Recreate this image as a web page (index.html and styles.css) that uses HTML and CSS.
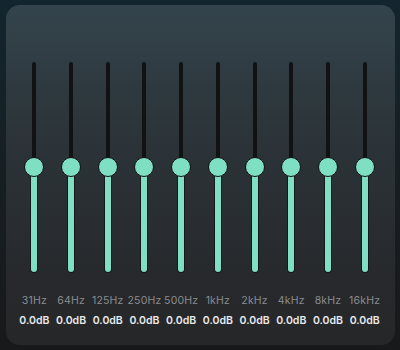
FILE: index.html
```html
<!DOCTYPE html>
<html>
<head>
  <meta charset="UTF-8">
  <title>Equalizer</title>
  <link rel="stylesheet" href="styles.css">
</head>
<body>
  <div class="page">
    <div class="eq-card">
      <div class="band">
        <div class="slider"><div class="track"></div><div class="fill"></div><div class="knob"></div></div>
        <div class="freq">31Hz</div>
        <div class="gain">0.0dB</div>
      </div>
      <div class="band">
        <div class="slider"><div class="track"></div><div class="fill"></div><div class="knob"></div></div>
        <div class="freq">64Hz</div>
        <div class="gain">0.0dB</div>
      </div>
      <div class="band">
        <div class="slider"><div class="track"></div><div class="fill"></div><div class="knob"></div></div>
        <div class="freq">125Hz</div>
        <div class="gain">0.0dB</div>
      </div>
      <div class="band">
        <div class="slider"><div class="track"></div><div class="fill"></div><div class="knob"></div></div>
        <div class="freq">250Hz</div>
        <div class="gain">0.0dB</div>
      </div>
      <div class="band">
        <div class="slider"><div class="track"></div><div class="fill"></div><div class="knob"></div></div>
        <div class="freq">500Hz</div>
        <div class="gain">0.0dB</div>
      </div>
      <div class="band">
        <div class="slider"><div class="track"></div><div class="fill"></div><div class="knob"></div></div>
        <div class="freq">1kHz</div>
        <div class="gain">0.0dB</div>
      </div>
      <div class="band">
        <div class="slider"><div class="track"></div><div class="fill"></div><div class="knob"></div></div>
        <div class="freq">2kHz</div>
        <div class="gain">0.0dB</div>
      </div>
      <div class="band">
        <div class="slider"><div class="track"></div><div class="fill"></div><div class="knob"></div></div>
        <div class="freq">4kHz</div>
        <div class="gain">0.0dB</div>
      </div>
      <div class="band">
        <div class="slider"><div class="track"></div><div class="fill"></div><div class="knob"></div></div>
        <div class="freq">8kHz</div>
        <div class="gain">0.0dB</div>
      </div>
      <div class="band">
        <div class="slider"><div class="track"></div><div class="fill"></div><div class="knob"></div></div>
        <div class="freq">16kHz</div>
        <div class="gain">0.0dB</div>
      </div>
    </div>
  </div>
</body>
</html>
```

FILE: styles.css
```css
html, body {
  margin: 0;
  height: 100%;
}

body {
  background: linear-gradient(to bottom, #13252e, #171d20 60%, #18191b);
  font-family: Inter, "Noto Sans", sans-serif;
}

.page {
  padding: 5px 5px 5px 6px;
  height: 350px;
  box-sizing: border-box;
}

.eq-card {
  height: 100%;
  box-sizing: border-box;
  border-radius: 14px;
  background: linear-gradient(to bottom, #34444c, #2c353a 35%, #27292c 80%, #262729);
  padding: 57px 12px 0 10px;
  display: flex;
}

.band {
  flex: 1;
  display: flex;
  flex-direction: column;
  align-items: center;
}

.slider {
  position: relative;
  width: 22px;
  height: 210px;
  display: flex;
  justify-content: center;
}

.track {
  width: 4px;
  height: 100%;
  background: #111214;
  border-radius: 2px;
}

.fill {
  position: absolute;
  left: 8px;
  top: 105px;
  width: 6px;
  height: 105px;
  background: #7fdfc3;
  border-radius: 0 0 3px 3px;
  box-shadow: 0 0 0 1px rgba(10, 12, 14, 0.6);
}

.knob {
  position: absolute;
  left: 1px;
  top: 95px;
  width: 20px;
  height: 20px;
  box-sizing: border-box;
  border-radius: 50%;
  background: #7fdfc3;
  border: 1px solid #101214;
}

.freq {
  margin-top: 22px;
  font-size: 10.5px;
  line-height: 14px;
  letter-spacing: 0.2px;
  color: #8a8d90;
  white-space: nowrap;
}

.gain {
  margin-top: 6px;
  font-size: 10.5px;
  line-height: 14px;
  font-weight: 600;
  color: #e8e9ea;
  white-space: nowrap;
}
```
